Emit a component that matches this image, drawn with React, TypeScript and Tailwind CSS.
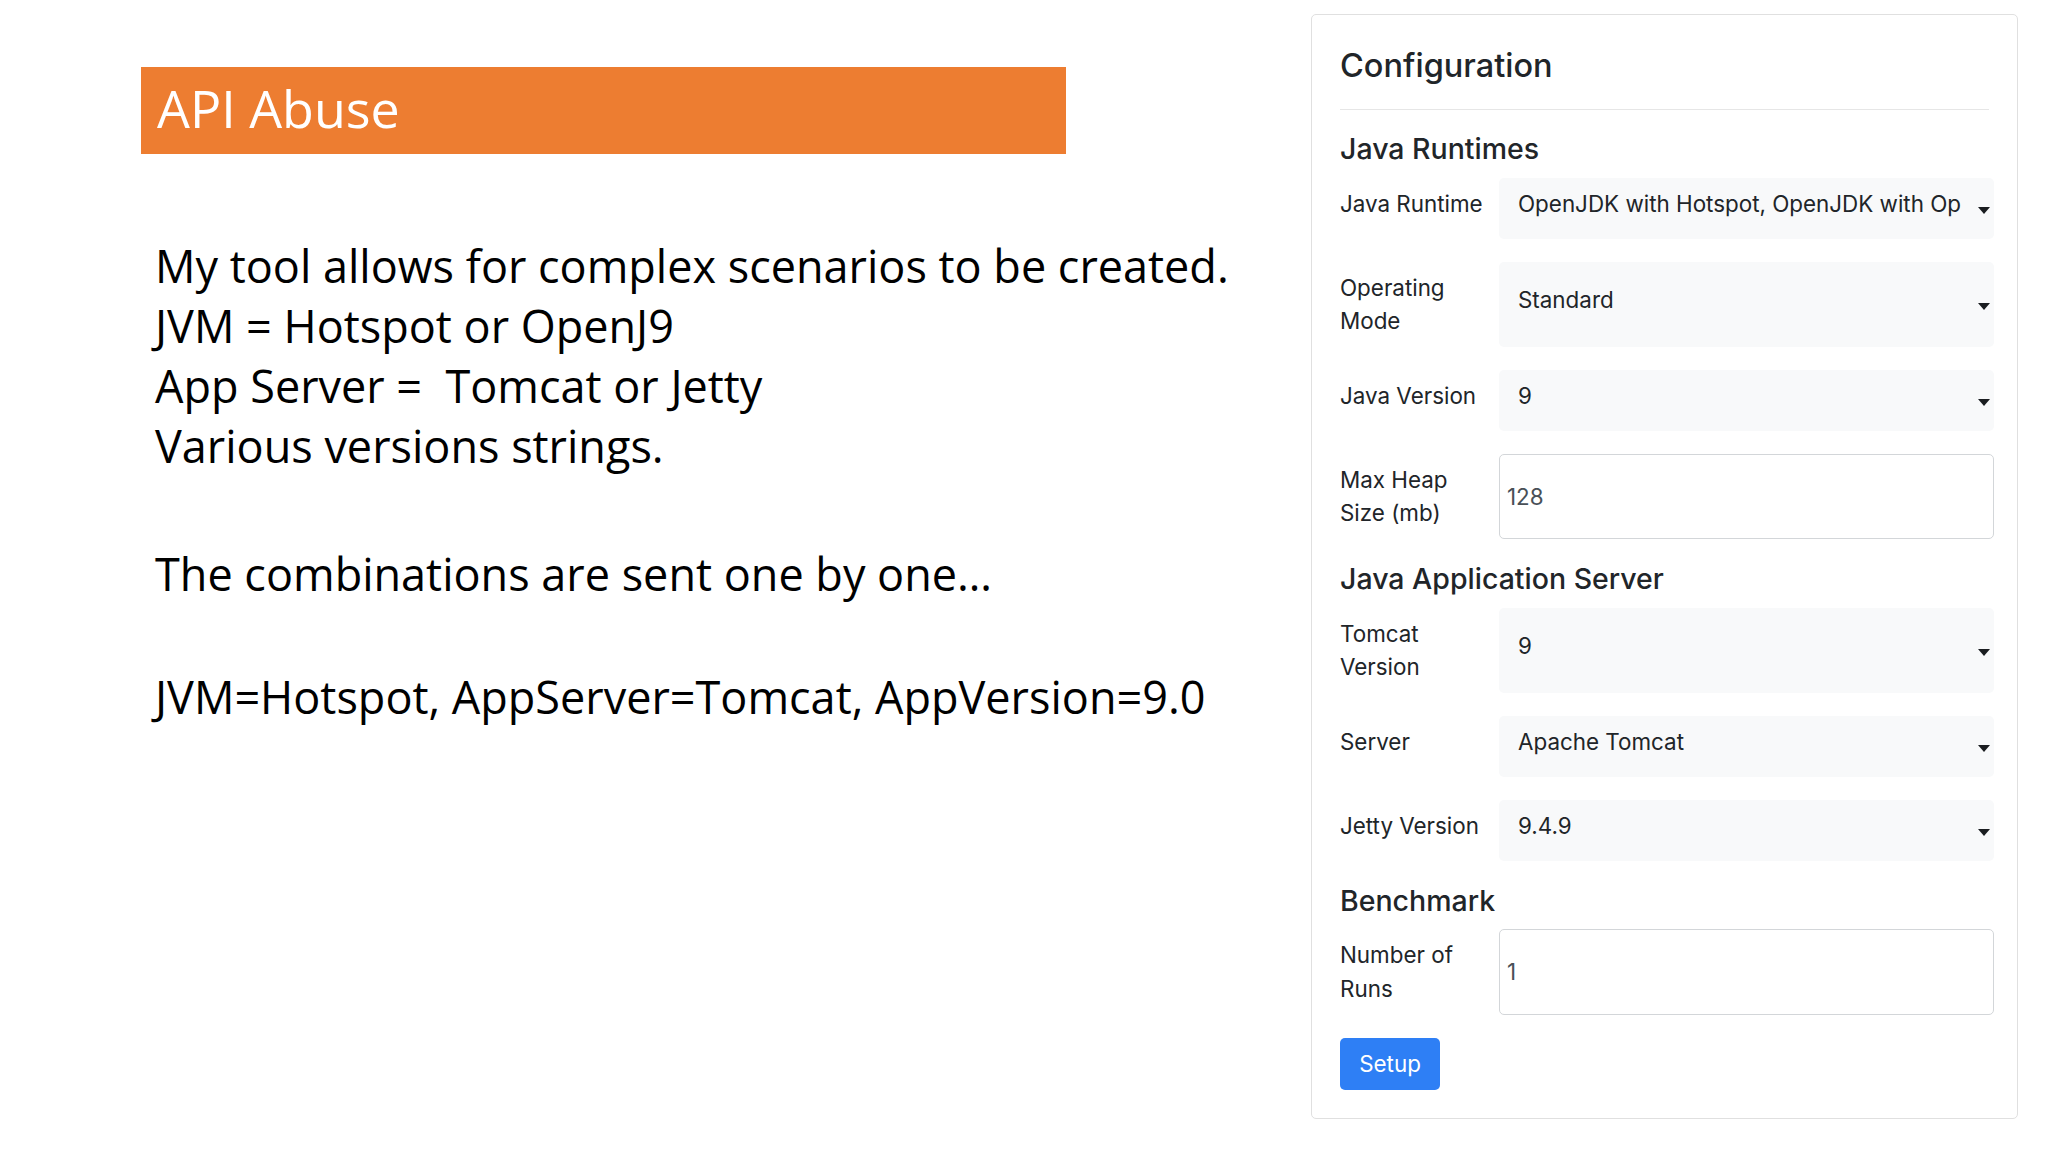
import React from 'react';

type Field =
  | { kind: 'select'; label: React.ReactNode; value: string }
  | { kind: 'input'; label: React.ReactNode; value: string };

const runtimes: Field[] = [
  { kind: 'select', label: 'Java Runtime', value: 'OpenJDK with Hotspot, OpenJDK with Op' },
  { kind: 'select', label: <>Operating<br />Mode</>, value: 'Standard' },
  { kind: 'select', label: 'Java Version', value: '9' },
  { kind: 'input', label: <>Max Heap<br />Size (mb)</>, value: '128' },
];

const servers: Field[] = [
  { kind: 'select', label: <>Tomcat<br />Version</>, value: '9' },
  { kind: 'select', label: 'Server', value: 'Apache Tomcat' },
  { kind: 'select', label: 'Jetty Version', value: '9.4.9' },
];

const benchmark: Field[] = [
  { kind: 'input', label: <>Number of<br />Runs</>, value: '1' },
];

const Row: React.FC<{ field: Field }> = ({ field }) => (
  <div className="mb-[23px] flex">
    <div className="w-[159px] shrink-0 whitespace-nowrap py-[9px] text-[22.4px] leading-[33.6px] text-[#212529]">
      {field.label}
    </div>
    {field.kind === 'select' ? (
      <div className="flex min-h-[61px] min-w-0 flex-1 items-center rounded-[5px] bg-[#f8f9fa] pb-[8px] pl-[19px] pr-[4px]">
        <span className="min-w-0 flex-1 overflow-hidden whitespace-nowrap text-[22.4px] leading-[33.6px] text-[#212529]">
          {field.value}
        </span>
        <span className="ml-[10px] mt-[13px] h-0 w-0 shrink-0 border-l-[6px] border-r-[6px] border-t-[7px] border-l-transparent border-r-transparent border-t-[#1a1d20]" />
      </div>
    ) : (
      <div className="flex min-w-0 flex-1 items-center rounded-[5px] border border-[#d3d6d9] bg-white pl-[7px] text-[22.4px] leading-[33.6px] text-[#495057]">
        {field.value}
      </div>
    )}
  </div>
);

const Heading: React.FC<{ children: React.ReactNode }> = ({ children }) => (
  <h5 className="mb-[12px] text-[28.5px] font-medium leading-[33.6px] text-[#212529]">{children}</h5>
);

export default function App() {
  return (
    <div className="flex h-[1152px] w-[2048px] overflow-hidden bg-white">
      {/* slide */}
      <div className="w-[1311px] shrink-0 pl-[141px] pt-[67px] font-['Open_Sans',sans-serif]">
        <div className="h-[87px] w-[925px] bg-[#ed7d31] pl-[16px] text-[52px] font-normal leading-[82px] text-white">
          API Abuse
        </div>
        <div className="mt-[82px] pl-[14px] text-[45px] leading-[60px] text-black">
          <p>My tool allows for complex scenarios to be created.</p>
          <p>JVM = Hotspot or OpenJ9</p>
          <p className="whitespace-pre">App Server =  Tomcat or Jetty</p>
          <p>Various versions strings.</p>
          <p className="mt-[68px]">The combinations are sent one by one…</p>
          <p className="mt-[63px]">JVM=Hotspot, AppServer=Tomcat, AppVersion=9.0</p>
        </div>
      </div>

      {/* configuration card */}
      <div className="mt-[14px] h-[1105px] w-[707px] shrink-0 rounded-[5px] border border-[#e0e0e0] pb-[29px] pl-[28px] pr-[23px] pt-[31px] font-['Inter',sans-serif]">
        <h4 className="mr-[5px] border-b border-[#e6e6e6] pb-[23px] text-[32.5px] font-medium leading-[40px] text-[#212529]">
          Configuration
        </h4>
        <div className="mt-[22px]">
          <Heading>Java Runtimes</Heading>
          {runtimes.map((f, i) => (
            <Row key={i} field={f} />
          ))}
          <Heading>Java Application Server</Heading>
          {servers.map((f, i) => (
            <Row key={i} field={f} />
          ))}
          <Heading>Benchmark</Heading>
          {benchmark.map((f, i) => (
            <Row key={i} field={f} />
          ))}
          <button className="flex h-[52px] w-[100px] items-center justify-center rounded-[5px] bg-[#2e7ff5] text-[22.4px] leading-[33.6px] text-white">
            Setup
          </button>
        </div>
      </div>
    </div>
  );
}
